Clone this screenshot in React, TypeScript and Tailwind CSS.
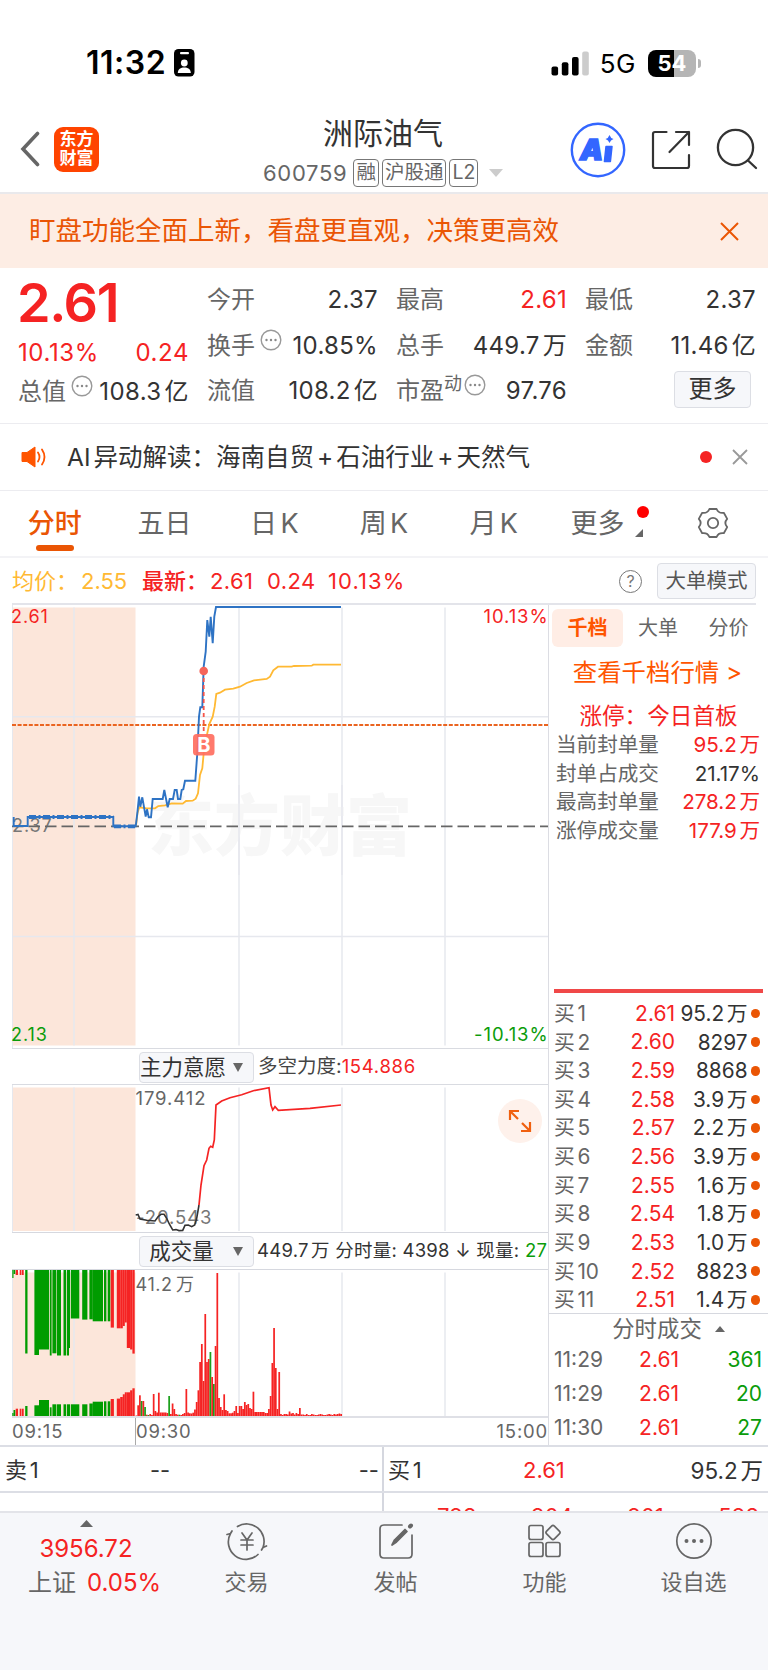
import { ReactNode } from 'react';

const stats = [
      [
            { label: '今开', value: '2.37' },
            { label: '换手', value: '10.85%', info: true },
            { label: '流值', value: '108.2亿' },
      ],
      [
            { label: '最高', value: '2.61', red: true },
            { label: '总手', value: '449.7万' },
            { label: '市盈', value: '97.76', info: true, sup: '动' },
      ],
      [
            { label: '最低', value: '2.37' },
            { label: '金额', value: '11.46亿' },
      ],
];

const tabs = ['分时', '五日', '日K', '周K', '月K'];

const sealRows = [
      { label: '当前封单量', value: '95.2万', red: true },
      { label: '封单占成交', value: '21.17%', red: false },
      { label: '最高封单量', value: '278.2万', red: true },
      { label: '涨停成交量', value: '177.9万', red: true },
];

const bids = [
      ['2.61', '95.2万'],
      ['2.60', '8297'],
      ['2.59', '8868'],
      ['2.58', '3.9万'],
      ['2.57', '2.2万'],
      ['2.56', '3.9万'],
      ['2.55', '1.6万'],
      ['2.54', '1.8万'],
      ['2.53', '1.0万'],
      ['2.52', '8823'],
      ['2.51', '1.4万'],
];

const trades = [
      ['11:29', '2.61', '361'],
      ['11:29', '2.61', '20'],
      ['11:30', '2.61', '27'],
];

const priceLine =
      '13.7,212 13.7,221 27.7,221 27.7,212 113.3,212 113.3,221.3 135.7,221.3 137.3,208.3 139,191.7 140.3,201.7 142.3,192.3 145.7,211.7 147,204.3 148.7,212.3 151,212.3 152.7,194 162.7,194 164.3,185 167.7,202.3 169.7,194 173,194 174.7,185 176.7,185 178,194 180.3,194 181.7,185 183.3,184.3 185,175.7 195.3,175.7 197.3,148.3 199,111.7 200.3,102.3 202.3,102.3 203.7,61.7 205.7,46.7 207.3,15 209.3,31.7 210.7,11.7 212.7,38.3 214.3,11.7 216,2 341,2';
const avgLine =
      '136,221 137.5,208 139.3,202.3 146.7,203.3 155,203.3 158.3,201 165,200.3 171.7,198.3 182.7,198.7 186,196 192.7,195.7 195.7,193.7 198,188.3 200,170 202.3,163.3 204.3,141.7 207.3,128.3 209.3,119 212.7,111.7 214.7,101.7 216.3,89 220,87.7 225,84.7 233.3,83.7 240,81.7 246.7,78 254,75.3 266.7,74 270,71.7 273.3,65.3 278,61.7 291.7,61.7 294,61 311.7,60.7 313.3,59.7 341,59.7';
const forceLow =
      '135.7,130 138,129.5 140,134 146.7,135.3 155,136 158,131.7 161,129.3 164,129.3 166.7,133.3 169.3,139 172.7,145 176,144.6 179,145.6 182.7,145.4 185,140.3 188.3,140 191.7,141.7 194.7,140 196.7,133.3 199,120';
const forceHigh =
      '199,120 201,100 204,80.7 206.7,75 209,63.3 210.7,61.3 212.7,62.3 214.3,55 216,20 221.7,16 230,12.7 241.7,9.7 253.3,5.7 269,2.7 271,20 272.7,25 275,21.7 278.3,25.3 310,23.3 341,20';

// call auction bars: [x, width, top bar length, bottom bar height, green?]
const auction: [number, number, number, number, boolean][] = [
      [12.3, 1.2, 8, 3, true], [13.5, 1.8, 4, 6, true], [15.7, 2.3, 5, 7.3, false], [19.7, 1.7, 5, 7.3, false], [21.9, 1.8, 5, 7.3, false],
      [25.2, 2.3, 83.5, 10, true], [34.4, 4.6, 85, 10.7, true], [39, 10, 79.5, 16, true],
      [49.8, 1.8, 85.5, 8.7, true], [52.4, 4, 83.3, 11.7, true], [57, 4, 85.5, 11.7, true],
      [63.5, 2.5, 85.5, 11.7, true], [66.8, 2.2, 85.5, 11.7, true], [69, 1, 78, 11.7, true],
      [70.8, 8.5, 48.5, 11.7, true], [82.2, 5.2, 49.6, 11.7, true], [89.4, 3.4, 49.3, 12.5, true],
      [92.7, 10.3, 51.3, 14.3, true], [104, 2.4, 51.3, 14.7, true], [107.7, 2.6, 51.3, 14.7, true],
      [110.7, 3.2, 57.6, 17, false], [116.8, 3.4, 58.3, 17.4, false], [120.2, 2.6, 58.3, 19, false],
      [122.8, 2, 56, 21.7, false], [124.8, 2, 52.5, 23.7, false], [126.8, 3.3, 78, 23.7, false],
      [130.1, 2.3, 79.5, 25.7, false], [132.4, 2.3, 83.6, 27.7, false],
];

const minuteVolume = [
      0.5, 10.7, 20.7, 15, 15, 9, 1.3, 1, 2, 1, 22, 5, 3.5, 23.3, 3.5, 3.5, 3.5, 3.5, 3, 20,
      2, 12.5, 7, 2, 1.3, 1.3, 1, 2, 3, 27, 3.5, 2.7, 2.5, 3.3, 6.5, 14, 25.7, 54, 72, 35,
      102, 54, 57, 64, 39, 32, 70, 143, 18, 9, 6, 21.7, 6, 5, 2.7, 2.7, 3.3, 5, 10, 3,
      10, 10, 7, 14, 11, 12, 8, 7, 24.3, 4, 4, 4, 4, 4, 4, 3, 3, 7, 20, 53,
      88, 48, 7, 44, 2, 1, 2, 2, 1.5, 4.5, 2.5, 3, 1.5, 3, 2, 8, 1.5, 1.5, 1, 2,
      1, 1, 2, 1.5, 1, 1, 1.5, 2, 1.5, 1, 1, 1.5, 2, 1.5, 1, 2, 1.5, 2, 2.5, 2,
];
const fallingMinutes = [3, 5, 7, 19, 25, 43, 45];

const gridX = [74, 239, 342, 445];

function Dots({ className }: { className: string }) {
      return (
            <svg className={className} width="22" height="22" viewBox="0 0 22 22" fill="none">
                  <circle cx="11" cy="11" r="9.8" stroke="#999" strokeWidth="1.4" />
                  <g fill="#888">
                        <circle cx="6.5" cy="11" r="1.2" />
                        <circle cx="11" cy="11" r="1.2" />
                        <circle cx="15.5" cy="11" r="1.2" />
                  </g>
            </svg>
      );
}

function StatusBar() {
      return (
            <div className="flex h-[106px] items-center pl-[86px] pr-[67px] pt-[20px]">
                  <span className="text-[32px] font-semibold tracking-[0.5px] text-black">11:32</span>
                  <svg className="ml-[8px]" width="21" height="28" viewBox="0 0 21 28">
                        <rect width="20.5" height="27.5" rx="4.5" fill="#000" />
                        <rect x="6" y="3" width="9" height="2.2" rx="1" fill="#fff" />
                        <circle cx="10.3" cy="14" r="3.4" fill="#fff" />
                        <path d="M3.8 24c0-4.2 3-5.6 6.5-5.6s6.5 1.4 6.5 5.6z" fill="#fff" />
                  </svg>
                  <svg className="ml-auto" width="39" height="25" viewBox="0 0 39 25">
                        <rect x="0.5" y="15.5" width="6.6" height="9" rx="2" fill="#000" />
                        <rect x="10.8" y="11.2" width="6.6" height="13.3" rx="2" fill="#000" />
                        <rect x="21" y="6" width="6.6" height="18.5" rx="2" fill="#000" />
                        <rect x="31.2" y="0.5" width="6.6" height="24" rx="2" fill="#ccc" />
                  </svg>
                  <span className="ml-[10px] text-[26px] tracking-[0.5px] text-black">5G</span>
                  <div className="ml-[12px] flex h-[27px] w-[48px] items-center justify-center rounded-[8px] bg-[linear-gradient(90deg,#000_54%,#b5b5b5_54%)] text-[22px] font-bold text-white">
                        54
                  </div>
                  <div className="ml-[2px] h-[9px] w-[3px] rounded-r-full bg-[#b5b5b5]" />
            </div>
      );
}

function Tag({ children }: { children: ReactNode }) {
      return (
            <span className="flex h-[28px] shrink-0 items-center whitespace-nowrap rounded-[4px] border border-[#777] px-[2px] text-[19.5px] text-[#666]">
                  {children}
            </span>
      );
}

function Header() {
      return (
            <div className="flex h-[88px] items-center border-b-2 border-[#e9e9ec] pl-[20px] pr-[9px]">
                  <div className="flex w-[243px] shrink-0 items-center">
                        <svg width="20" height="36" viewBox="0 0 20 36" fill="none">
                              <path d="M17.5 2.5 3 18l14.5 15.5" stroke="#666" strokeWidth="3.6" strokeLinecap="round" />
                        </svg>
                        <div className="ml-[14px] flex h-[45px] w-[45px] flex-col items-center justify-center rounded-[9px] bg-[#ff4400] text-[17px] font-bold leading-[19px] text-white">
                              <span>东方</span>
                              <span>财富</span>
                        </div>
                  </div>
                  <div className="flex w-[241px] shrink-0 flex-col">
                        <div className="ml-[60px] mt-[7px] text-[30px] leading-[40px] text-[#333]">洲际油气</div>
                        <div className="mt-[1px] flex h-[38px] items-center gap-[3px]">
                              <span className="mr-[3px] text-[22px] tracking-[0.7px] text-[#666]">600759</span>
                              <Tag>融</Tag>
                              <Tag>沪股通</Tag>
                              <Tag>L2</Tag>
                              <svg className="ml-[8px] shrink-0" width="14" height="8" viewBox="0 0 14 8">
                                    <path d="M0 0h14L7 8z" fill="#ccc" />
                              </svg>
                        </div>
                  </div>
                  <svg className="ml-[66px] mt-[1px]" width="56" height="56" viewBox="0 0 56 56" fill="none">
                        <circle cx="28" cy="28" r="26.2" stroke="#3366ff" strokeWidth="2.4" />
                        <text x="10" y="38" fontSize="29" fontWeight="900" fontStyle="italic" fill="#3366ff" stroke="#3366ff" strokeWidth="1.6">A</text>
                        <path d="m36 24.5 6 0-1.6 15-6 0z" fill="#3366ff" stroke="#3366ff" strokeWidth="1.5" strokeLinejoin="round" />
                        <path d="M39.5 13q1 3.2 4 4-3 .8-4 4-1-3.2-4-4 3-.8 4-4z" fill="#3366ff" />
                  </svg>
                  <svg className="ml-[25px] mt-[1px]" width="40" height="40" viewBox="0 0 40 40" fill="none" stroke="#333" strokeWidth="2.2" strokeLinecap="round" strokeLinejoin="round">
                        <path d="M15.5 2H4Q2 2 2 4v32q0 2 2 2h32q2 0 2-2V25" />
                        <path d="M25 2h13v13M38 2 18.5 22" />
                  </svg>
                  <svg className="ml-[25px]" width="42" height="42" viewBox="0 0 42 42" fill="none" stroke="#333" strokeWidth="2.3" strokeLinecap="round">
                        <circle cx="19.5" cy="19.5" r="17.6" />
                        <path d="m32 32.500 8 7.500" />
                  </svg>
            </div>
      );
}

function Stats() {
      return (
            <div className="flex h-[156px] gap-[18px] border-b border-[#ececf0] pl-[18px] pr-[12px] pt-[9px]">
                  <div className="w-[171px] text-[#f52323]">
                        <div className="-ml-px h-[54px] text-[54px] font-semibold leading-[52px] tracking-[-1.4px]">2.61</div>
                        <div className="flex h-[39px] items-end justify-between text-[24px] leading-[34px] tracking-[0.6px]">
                              <span>10.13%</span>
                              <span>0.24</span>
                        </div>
                        <div className="flex h-[44px] items-center text-[24px] text-[#333]">
                              <span className="text-[#666]">总值</span>
                              <Dots className="-mt-[12px] ml-[5px]" />
                              <span className="ml-auto tracking-[0.4px]">108.3亿</span>
                        </div>
                  </div>
                  {stats.map((column, i) => (
                        <div key={i} className="w-[171px]">
                              {column.map((item) => (
                                    <div key={item.label} className="flex h-[45.8px] items-center text-[24px]">
                                          <span className="text-[#666]">{item.label}</span>
                                          {item.sup && <span className="-mt-[16px] text-[18px] text-[#666]">{item.sup}</span>}
                                          {item.info && <Dots className={item.sup ? '-mt-[12px] ml-[2px]' : '-mt-[12px] ml-[5px]'} />}
                                          <span className={item.red ? 'ml-auto tracking-[0.3px] text-[#f52323]' : 'ml-auto tracking-[0.3px] text-[#333]'}>{item.value}</span>
                                    </div>
                              ))}
                              {i === 2 && (
                                    <div className="ml-auto mr-[5px] mt-[2px] flex h-[37px] w-[77px] items-center justify-center rounded-[4px] border border-[#dcdee4] bg-[#f6f7fa] text-[24px] text-[#333]">
                                          更多
                                    </div>
                              )}
                        </div>
                  ))}
            </div>
      );
}

function News() {
      return (
            <div className="flex h-[67px] items-center border-b border-[#ececf0] pl-[21px] pr-[20px]">
                  <svg width="26" height="22" viewBox="0 0 26 22" fill="none">
                        <path d="M1 6.5h5L14 1v20l-8-5.5H1z" fill="#ff5500" stroke="#ff5500" strokeLinejoin="round" />
                        <path d="M17 6.5q3 4.5 0 9M21 3.5q5 7.5 0 15" stroke="#ff5500" strokeWidth="1.8" strokeLinecap="round" />
                  </svg>
                  <span className="ml-[20px] text-[24.5px] text-[#333]">
                        AI异动解读：海南自贸<span className="mx-[3px]">+</span>石油行业<span className="mx-[3px]">+</span>天然气
                  </span>
                  <span className="ml-auto h-[12px] w-[12px] rounded-full bg-[#f52323]" />
                  <svg className="ml-[20px]" width="16" height="16" viewBox="0 0 16 16" stroke="#999" strokeWidth="1.8">
                        <path d="m1 1 14 14M15 1 1 15" />
                  </svg>
            </div>
      );
}

function Tabs() {
      return (
            <div className="grid h-[67px] grid-cols-7 border-b-2 border-[#f3f3f6] text-[27px] text-[#666]">
                  {tabs.map((tab, i) => (
                        <div key={tab} className="flex flex-col items-center">
                              <span className={i === 0 ? 'mt-[12px] leading-[42px] font-medium text-[#ea5504]' : 'mt-[12px] leading-[42px]'}>{tab}</span>
                              {i === 0 && <span className="h-[6px] w-[38px] rounded-full bg-[#ea5504]" />}
                        </div>
                  ))}
                  <div className="relative flex justify-center pr-[12px] pt-[12px] leading-[42px]">
                        更多
                        <span className="absolute right-[9px] top-[15px] h-[12px] w-[12px] rounded-full bg-[#ff0000]" />
                        <svg className="absolute right-[15px] top-[38px]" width="8" height="8">
                              <path d="M8 0v8H0z" fill="#666" />
                        </svg>
                  </div>
                  <div className="flex justify-center pt-[16px]">
                        <svg width="32" height="32" viewBox="-16 -16 32 32" fill="none" stroke="#666" strokeWidth="1.8" strokeLinejoin="round">
                              <path d="M-3.6-14L3.6-14Q5.4-9.4 10.8-10.2L14.2-4.1Q10.5 0 14.2 4.1L10.8 10.2Q5.4 9.4 3.6 14L-3.6 14Q-5.4 9.4-10.8 10.2L-14.2 4.1Q-10.5 0-14.2-4.1L-10.8-10.2Q-5.4-9.4-3.6-14Z" />
                              <circle r="5.2" />
                        </svg>
                  </div>
            </div>
      );
}

function Summary() {
      return (
            <div className="mx-[12px] flex h-[47px] items-center border-b-2 border-[#e3e4ea] pt-px text-[22px] text-[#f52323]">
                  <span className="w-[69px] text-[#ffb933]">均价：</span>
                  <span className="w-[61px] text-[#ffb933]">2.55</span>
                  <span className="w-[68px] font-medium">最新：</span>
                  <span className="w-[57px] tracking-[0.4px]">2.61</span>
                  <span className="w-[61px] tracking-[0.4px]">0.24</span>
                  <span className="tracking-[1.1px]">10.13%</span>
                  <span className="ml-auto flex h-[23px] w-[23px] items-center justify-center rounded-full border border-[#777] text-[16px] text-[#777]">?</span>
                  <span className="ml-[15px] flex h-[36px] w-[99px] items-center justify-center rounded-[4px] border border-[#dcdee4] bg-[#f6f7fa] text-[20.5px] text-[#555]">
                        大单模式
                  </span>
            </div>
      );
}

function Grid({ height }: { height: number }) {
      return (
            <g>
                  <rect x="12" y="2.5" width="123.5" height={height} fill="#fce6da" />
                  {gridX.map((x) => (
                        <path key={x} d={`M${x} 2.5v${height}`} stroke="#e6e8ee" strokeWidth="1.5" />
                  ))}
                  <path d="M12.5 0V445" stroke="#e6e8ee" />
            </g>
      );
}

function PriceChart() {
      return (
            <svg className="block" width="548" height="443" viewBox="0 0 548 443" fontSize="18" letterSpacing="0.9" fill="none">
                  <Grid height={438} />
                  <path d="M12 111.7H548M12 331.5H548" stroke="#e6e8ee" strokeWidth="1.5" />
                  <text x="148" y="245" fontSize="66" fontWeight="900" letterSpacing="0" fill="#f7f7f7">东方财富</text>
                  <path d="M239 180v90M342 180v90" stroke="#e6e8ee" strokeWidth="1.5" />
                  <path d="M12 120H548" stroke="#ea6420" strokeWidth="1.8" strokeDasharray="4 1.6" />
                  <text x="12" y="227" fill="#777">2.37</text>
                  <path d="M12 221.3H548" stroke="#666" strokeWidth="1.7" strokeDasharray="11.5 5" />
                  <polyline points={avgLine} stroke="#ffb933" strokeWidth="1.8" />
                  <polyline points={priceLine} stroke="#2e73c4" strokeWidth="1.9" />
                  <path d="M29 212H113.3M114 221.3H136" stroke="#2e73c4" strokeWidth="3.8" strokeDasharray="7 2.5 2 2.5" />
                  <path d="M203.7 66v63" stroke="#f5554a" strokeWidth="1.8" strokeDasharray="4 3" />
                  <circle cx="203.7" cy="66" r="4.3" fill="#f5645a" />
                  <rect x="193" y="129" width="21.5" height="21.5" rx="3.5" fill="#ff6f61" fillOpacity="0.93" />
                  <text x="204.2" y="147" textAnchor="middle" fontSize="20" fontWeight="700" fill="#fff">B</text>
                  <text x="11" y="18" fill="#f52323">2.61</text>
                  <text x="548.5" y="18" textAnchor="end" fontSize="18.5" fill="#f52323">10.13%</text>
                  <text x="11" y="435.5" fill="#0a9c0a">2.13</text>
                  <text x="548.5" y="435.5" textAnchor="end" fontSize="18.5" fill="#0a9c0a">-10.13%</text>
            </svg>
      );
}

function Picker({ children, center }: { children: ReactNode; center?: boolean }) {
      return (
            <div className="flex h-[31px] w-[115px] shrink-0 items-center rounded-[4px] border border-[#dcdee4] bg-[#f6f7fa] text-[21.5px] text-[#333]">
                  <span className={center ? 'w-[90px] pr-[7px] text-center' : 'w-[90px]'}>{children}</span>
                  <svg className="ml-[3px]" width="10" height="9">
                        <path d="M0 0h10L5 9z" fill="#666" />
                  </svg>
            </div>
      );
}

function ForceChart() {
      return (
            <div className="relative">
                  <svg className="block" width="548" height="147" viewBox="0 0 548 147" fontSize="18.5" letterSpacing="0.9" fill="none">
                        <Grid height={143.5} />
                        <text x="135.5" y="20" fill="#666">179.412</text>
                        <text x="136" y="139" fill="#777">-20.543</text>
                        <polyline points={forceLow} stroke="#333" strokeWidth="1.6" />
                        <polyline points={forceHigh} stroke="#f52323" strokeWidth="1.7" />
                  </svg>
                  <div className="absolute right-[6px] top-[14px] flex h-[44px] w-[44px] items-center justify-center rounded-full bg-[#fef1eb]">
                        <svg width="24" height="24" viewBox="0 0 24 24" fill="none" stroke="#f0600f" strokeWidth="2.2">
                              <path d="M2 11V2h9M2 2l8 8M22 13v9h-9M22 22l-8-8" />
                        </svg>
                  </div>
            </div>
      );
}

function VolumeChart() {
      return (
            <svg className="block" width="548" height="146" viewBox="0 0 548 146" fontSize="18">
                  <Grid height={146} />
                  {auction.map(([x, w, top, bottom, green]) => (
                        <g key={x} fill={green ? '#009c00' : '#f52323'}>
                              <rect x={x} y="0" width={w} height={top} />
                              <rect x={x} y={146 - bottom} width={w} height={bottom} />
                        </g>
                  ))}
                  {minuteVolume.map((v, i) => (
                        <rect key={i} x={135.6 + i * 1.72} y={146 - v} width="1.73" height={v} fill={fallingMinutes.includes(i) ? '#1da01d' : '#f52323'} />
                  ))}
                  <text x="135.5" y="20.5" fill="#666"><tspan letterSpacing="0.6">41.2</tspan><tspan dx="1">万</tspan></text>
            </svg>
      );
}

function Charts() {
      return (
            <div className="w-[549px] border-r border-[#dcdde3]">
                  <PriceChart />
                  <div className="ml-[12px] flex h-[37px] items-center border-y border-[#d9dbe1] pl-[127px] pt-px">
                        <Picker>主力意愿</Picker>
                        <span className="ml-[4px] text-[19.5px] text-[#444]">多空力度:</span>
                        <span className="text-[18.5px] tracking-[0.7px] text-[#f52323]">154.886</span>
                  </div>
                  <ForceChart />
                  <div className="ml-[12px] flex h-[38px] items-center whitespace-nowrap border-y border-[#d6d8df] pl-[127px]">
                        <Picker center>成交量</Picker>
                        <span className="ml-[3px] text-[18.5px] tracking-[0.25px] text-[#333]">
                              449.7万 分时量: 4398 ↓ 现量: <span className="text-[#0a9c0a]">27</span>
                        </span>
                  </div>
                  <VolumeChart />
                  <div className="ml-[12px] flex h-[29px] items-center border-t-2 border-[#dfe0e6] text-[18.5px] tracking-[0.8px] text-[#666]">
                        <span className="flex h-full w-[124px] items-center border-r border-[#aaa]">09:15</span>
                        <span>09:30</span>
                        <span className="ml-auto">15:00</span>
                  </div>
            </div>
      );
}

function SidePanel() {
      return (
            <div className="flex w-[219px] flex-col">
                  <div className="mt-[4px] flex h-[38px] items-center pl-[3px] text-[20px] text-[#666]">
                        <span className="flex h-full w-[71px] items-center justify-center rounded-[6px] bg-[#ffede5] font-bold text-[#ff5500]">千档</span>
                        <span className="w-[70px] text-center">大单</span>
                        <span className="w-[71px] text-center">分价</span>
                  </div>
                  <div className="mt-[6px] h-[40px] pr-[2px] text-center text-[24.4px] leading-[38px] text-[#ff5500]">查看千档行情 &gt;</div>
                  <div className="mt-[8px] h-[30px] text-center text-[22.6px] leading-[30px] text-[#f52323]">涨停：今日首板</div>
                  {sealRows.map((row) => (
                        <div key={row.label} className="flex h-[28.7px] items-center justify-between pl-[7px] pr-[8px] text-[20.6px]">
                              <span className="text-[#666]">{row.label}</span>
                              <span className={row.red ? 'text-[#f52323]' : 'text-[#333]'}>{row.value}</span>
                        </div>
                  ))}
                  <div className="mx-[5px] mt-[143.5px] h-[4px] bg-[#f04848]" />
                  <div className="mt-[6px] h-[315px] border-b border-[#d6d8df]">
                        {bids.map(([price, volume], i) => (
                              <div key={price} className="flex h-[28.65px] items-center pl-[5px] pr-[8px] text-[20.8px]">
                                    <span className="w-[51px] whitespace-nowrap text-[#666]">买{i + 1}</span>
                                    <span className="w-[70px] text-right text-[21px] text-[#f52323]">{price}</span>
                                    <span className="ml-auto text-[#333]">{volume}</span>
                                    <span className="ml-[3px] h-[9.5px] w-[9.5px] rounded-full bg-[#ea5504]" />
                              </div>
                        ))}
                  </div>
                  <div className="flex h-[29px] items-center justify-center pl-[20px] text-[22.4px] text-[#666]">
                        分时成交
                        <svg className="ml-[13px]" width="10" height="6">
                              <path d="M0 6h10L5 0z" fill="#666" />
                        </svg>
                  </div>
                  {trades.map(([time, price, volume], i) => (
                        <div key={i} className="flex h-[34px] items-center pl-[5px] pr-[6px] text-[21px]">
                              <span className="w-[54px] text-[#666]">{time}</span>
                              <span className="w-[71px] text-right text-[#f52323]">{price}</span>
                              <span className="ml-auto text-[#0a9c0a]">{volume}</span>
                        </div>
                  ))}
            </div>
      );
}

function OrderRows() {
      return (
            <div className="h-[66px] overflow-hidden border-t-2 border-[#dcdee5] text-[22px] text-[#333]">
                  <div className="flex h-[46px] border-b-2 border-[#dcdee5]">
                        <div className="flex w-[384px] items-center border-r-2 border-[#d5d7df] pl-[5px] pr-[3px] pt-[3px]">
                              <span className="w-[145px]">卖1</span>
                              <span>--</span>
                              <span className="ml-auto">--</span>
                        </div>
                        <div className="flex flex-1 items-center pl-[4px] pr-[5px] pt-[3px]">
                              <span className="w-[135px]">买1</span>
                              <span className="text-[#f52323]">2.61</span>
                              <span className="ml-auto text-[22.5px]">95.2万</span>
                        </div>
                  </div>
                  <div className="flex h-[40px]">
                        <div className="w-[384px] border-r-2 border-[#d5d7df]" />
                        <div className="flex flex-1 justify-between pl-[53px] pr-[9px] pt-[10px] leading-[26px] text-[#f52323]">
                              <span>798</span>
                              <span>904</span>
                              <span>901</span>
                              <span>598</span>
                        </div>
                  </div>
            </div>
      );
}

function NavItem({ label, children }: { label: string; children: ReactNode }) {
      return (
            <div className="flex w-[149px] flex-col items-center">
                  <svg className="mt-[6px]" width="44" height="44" viewBox="-22 -22 44 44" fill="none" stroke="#666" strokeWidth="1.7" strokeLinecap="round" strokeLinejoin="round">
                        {children}
                  </svg>
                  <span className="mt-[3px] text-[22px] leading-[32px] text-[#666]">{label}</span>
            </div>
      );
}

function BottomNav() {
      return (
            <div className="flex h-[159px] border-t-2 border-[#e3e4e9] bg-[#f6f7fa]">
                  <div className="flex w-[172px] flex-col items-center text-[#f52323]">
                        <svg className="mt-[7px]" width="13" height="7">
                              <path d="M0 7h13L6.5 0z" fill="#666" />
                        </svg>
                        <span className="mt-[8px] text-[24px] leading-[28px]">3956.72</span>
                        <span className="mt-[5px] pl-[17px] text-[24px] leading-[30px]">
                              <span className="mr-[8px] text-[#666]">上证</span>0.05%
                        </span>
                  </div>
                  <NavItem label="交易">
                        <path d="M-9.5-14.5A17.5 17.5 0 0 1 16 6.5M16 6.5 19.5 5M16 6.5l-1.5 2.5" />
                        <path d="M11 13.5A17.5 17.5 0 0 1-16.5-7.5M-16.5-7.5-20-6.5M-16.5-7.5l1.5-2.5" />
                        <path d="m-5-8 5 7 5-7M0-1V9M-6-1H6M-6 4H6" />
                  </NavItem>
                  <NavItem label="发帖">
                        <path d="M6-16h-18q-4 0-4 4v25q0 4 4 4h24q4 0 4-4V-6" />
                        <path d="M-4 4-1.5-1 9-11.5 11-9.500 .5 1z" fill="#666" />
                        <path d="m14-14.500 1-1" strokeWidth="4" />
                  </NavItem>
                  <NavItem label="功能">
                        <rect x="-16" y="-15.5" width="14" height="14" rx="2" />
                        <rect x="-16" y="1.5" width="14" height="14" rx="2" />
                        <rect x="1" y="1.5" width="14" height="14" rx="2" />
                        <rect x="2.5" y="-14" width="11" height="11" rx="2" transform="rotate(45 8 -8.5)" />
                  </NavItem>
                  <NavItem label="设自选">
                        <circle r="17.2" />
                        <path d="M-7.5 0h.01M0 0h.01M7.5 0h.01" strokeWidth="4" />
                  </NavItem>
            </div>
      );
}

export default function App() {
      return (
            <div className="h-[1670px] w-[768px] overflow-hidden bg-white font-['Inter','Noto_Sans_CJK_SC',sans-serif] [text-autospace:normal]">
                  <StatusBar />
                  <Header />
                  <div className="flex h-[74px] items-center justify-between bg-[#fdede4] pl-[29px] pr-[29px] text-[26.5px] text-[#ea5504]">
                        <span>盯盘功能全面上新，看盘更直观，决策更高效</span>
                        <svg width="19" height="19" viewBox="0 0 19 19" stroke="#ea5504" strokeWidth="2">
                              <path d="m1 1 17 17M18 1 1 18" />
                        </svg>
                  </div>
                  <Stats />
                  <News />
                  <Tabs />
                  <Summary />
                  <div className="flex h-[840px]">
                        <Charts />
                        <SidePanel />
                  </div>
                  <OrderRows />
                  <BottomNav />
            </div>
      );
}
